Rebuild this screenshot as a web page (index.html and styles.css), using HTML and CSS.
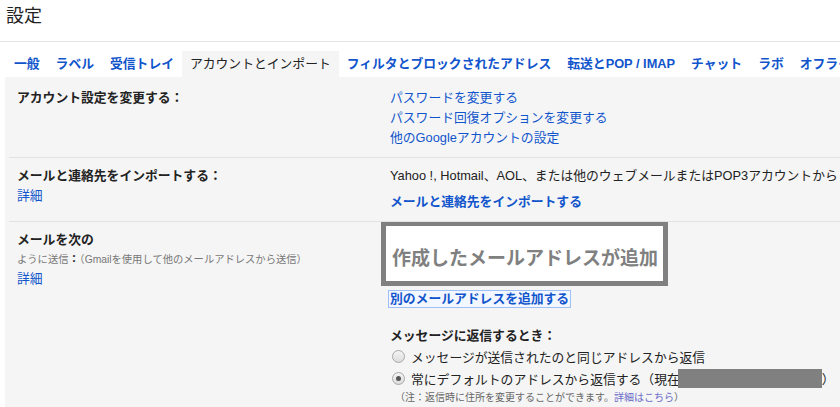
FILE: index.html
```html
<!DOCTYPE html>
<html lang="ja">
<head>
<meta charset="utf-8">
<title>設定</title>
<link rel="stylesheet" href="styles.css">
</head>
<body>
<header class="header"><h1 class="title">設定</h1></header>
<nav class="tabs">
  <a class="tab">一般</a>
  <a class="tab">ラベル</a>
  <a class="tab">受信トレイ</a>
  <a class="tab active">アカウントとインポート</a>
  <a class="tab">フィルタとブロックされたアドレス</a>
  <a class="tab">転送とPOP / IMAP</a>
  <a class="tab">チャット</a>
  <a class="tab">ラボ</a>
  <a class="tab">オフライン</a>
</nav>
<main class="content">
  <section class="row row-first">
    <div class="label"><div class="label-title">アカウント設定を変更する：</div></div>
    <div class="value">
      <a class="link line">パスワードを変更する</a>
      <a class="link line">パスワード回復オプションを変更する</a>
      <a class="link line">他のGoogleアカウントの設定</a>
    </div>
  </section>
  <section class="row">
    <div class="label">
      <div class="label-title">メールと連絡先をインポートする：</div>
      <a class="link line">詳細</a>
    </div>
    <div class="value">
      <div class="line">Yahoo !, Hotmail、AOL、または他のウェブメールまたはPOP3アカウントから</div>
      <a class="link strong line spaced">メールと連絡先をインポートする</a>
    </div>
  </section>
  <section class="row row-last">
    <div class="label">
      <div class="label-title">メールを次の</div>
      <div class="hint">ように送信<b class="colon">：</b>（Gmailを使用して他のメールアドレスから送信）</div>
      <a class="link line">詳細</a>
    </div>
    <div class="value">
      <div class="callout"><span class="callout-text">作成したメールアドレスが追加</span></div>
      <div class="add-line"><a class="link strong focused">別のメールアドレスを追加する</a></div>
      <div class="reply-title">メッセージに返信するとき：</div>
      <label class="radio-row"><span class="radio"></span>メッセージが送信されたのと同じアドレスから返信</label>
      <label class="radio-row"><span class="radio checked"></span>常にデフォルトのアドレスから返信する（現在<span class="redacted"></span>）</label>
      <div class="note">（注：返信時に住所を変更することができます。<a class="note-link">詳細はこちら</a>）</div>
    </div>
  </section>
</main>
</body>
</html>
```
FILE: styles.css
```css
html, body {
  margin: 0;
  padding: 0;
  background: #ffffff;
}
body {
  font-family: "Liberation Sans", "Noto Sans CJK JP", sans-serif;
  font-size: 12.8px;
  color: #222222;
  width: 840px;
  height: 407px;
  overflow: hidden;
}
.header {
  height: 41px;
  border-bottom: 1px solid #e5e5e5;
  box-sizing: content-box;
}
.title {
  margin: 0;
  padding: 3px 0 0 6px;
  font-size: 18px;
  font-weight: normal;
  line-height: 26px;
  color: #222222;
}
.tabs {
  display: flex;
  margin-top: 9px;
  padding-left: 6px;
  white-space: nowrap;
  overflow: hidden;
}
.tab {
  flex: none;
  padding: 0 8px;
  height: 26px;
  line-height: 26px;
  color: #1155cc;
  font-weight: bold;
  cursor: pointer;
}
.tab.active {
  background: #f5f5f5;
  color: #222222;
  font-weight: normal;
}
.content {
  margin-left: 5px;
  padding-left: 4px;
  background: #f5f5f5;
  height: 330px;
}
.row {
  display: grid;
  grid-template-columns: 373px 1fr;
  padding: 8px 0 9px 8px;
  border-bottom: 1px solid #e2e2e2;
  white-space: nowrap;
  overflow: hidden;
}
.row-first {
  padding-top: 11px;
}
.row-last {
  border-bottom: none;
}
.line {
  display: block;
  line-height: 20px;
}
.label-title {
  font-weight: bold;
  line-height: 20px;
}
.link {
  color: #1155cc;
  cursor: pointer;
}
.strong {
  font-weight: bold;
}
.spaced {
  margin-top: 6px;
}
.hint {
  font-size: 10.3px;
  line-height: 19px;
  color: #777777;
}
.colon {
  color: #333333;
  font-size: 11px;
}
.callout {
  margin: -9px 0 0 -9px;
  width: 271px;
  border: 5px solid #808080;
  background: #ffffff;
  padding: 21px 0 0 6px;
  box-sizing: content-box;
  height: 34px;
}
.callout-text {
  font-size: 19px;
  line-height: 24px;
  font-weight: bold;
  color: #808080;
  display: block;
}
.add-line {
  margin-top: 5px;
  line-height: 16px;
}
.focused {
  display: inline-block;
  margin-left: -1px;
  padding: 0 1px;
  line-height: 16px;
  outline: 1px solid #9fc0f7;
  background: #f3f7ff;
}
.reply-title {
  margin-top: 20px;
  font-weight: bold;
  line-height: 18px;
}
.radio-row {
  display: flex;
  align-items: center;
  height: 22px;
  margin-left: 2px;
}
.radio {
  flex: none;
  width: 11px;
  height: 11px;
  border: 1px solid #a9a9a9;
  border-radius: 50%;
  background: linear-gradient(#f4f4f4, #dcdcdc);
  margin-right: 6px;
  position: relative;
}
.radio.checked::after {
  content: "";
  position: absolute;
  left: 3px;
  top: 3px;
  width: 5px;
  height: 5px;
  border-radius: 50%;
  background: #555555;
}
.redacted {
  display: inline-block;
  width: 144px;
  height: 19px;
  background: #808080;
  margin-left: -2px;
}
.note {
  margin-top: 1px;
  padding-left: 5px;
  font-size: 10px;
  line-height: 16px;
  color: #666666;
}
.note-link {
  color: #6a6ac8;
}
```
